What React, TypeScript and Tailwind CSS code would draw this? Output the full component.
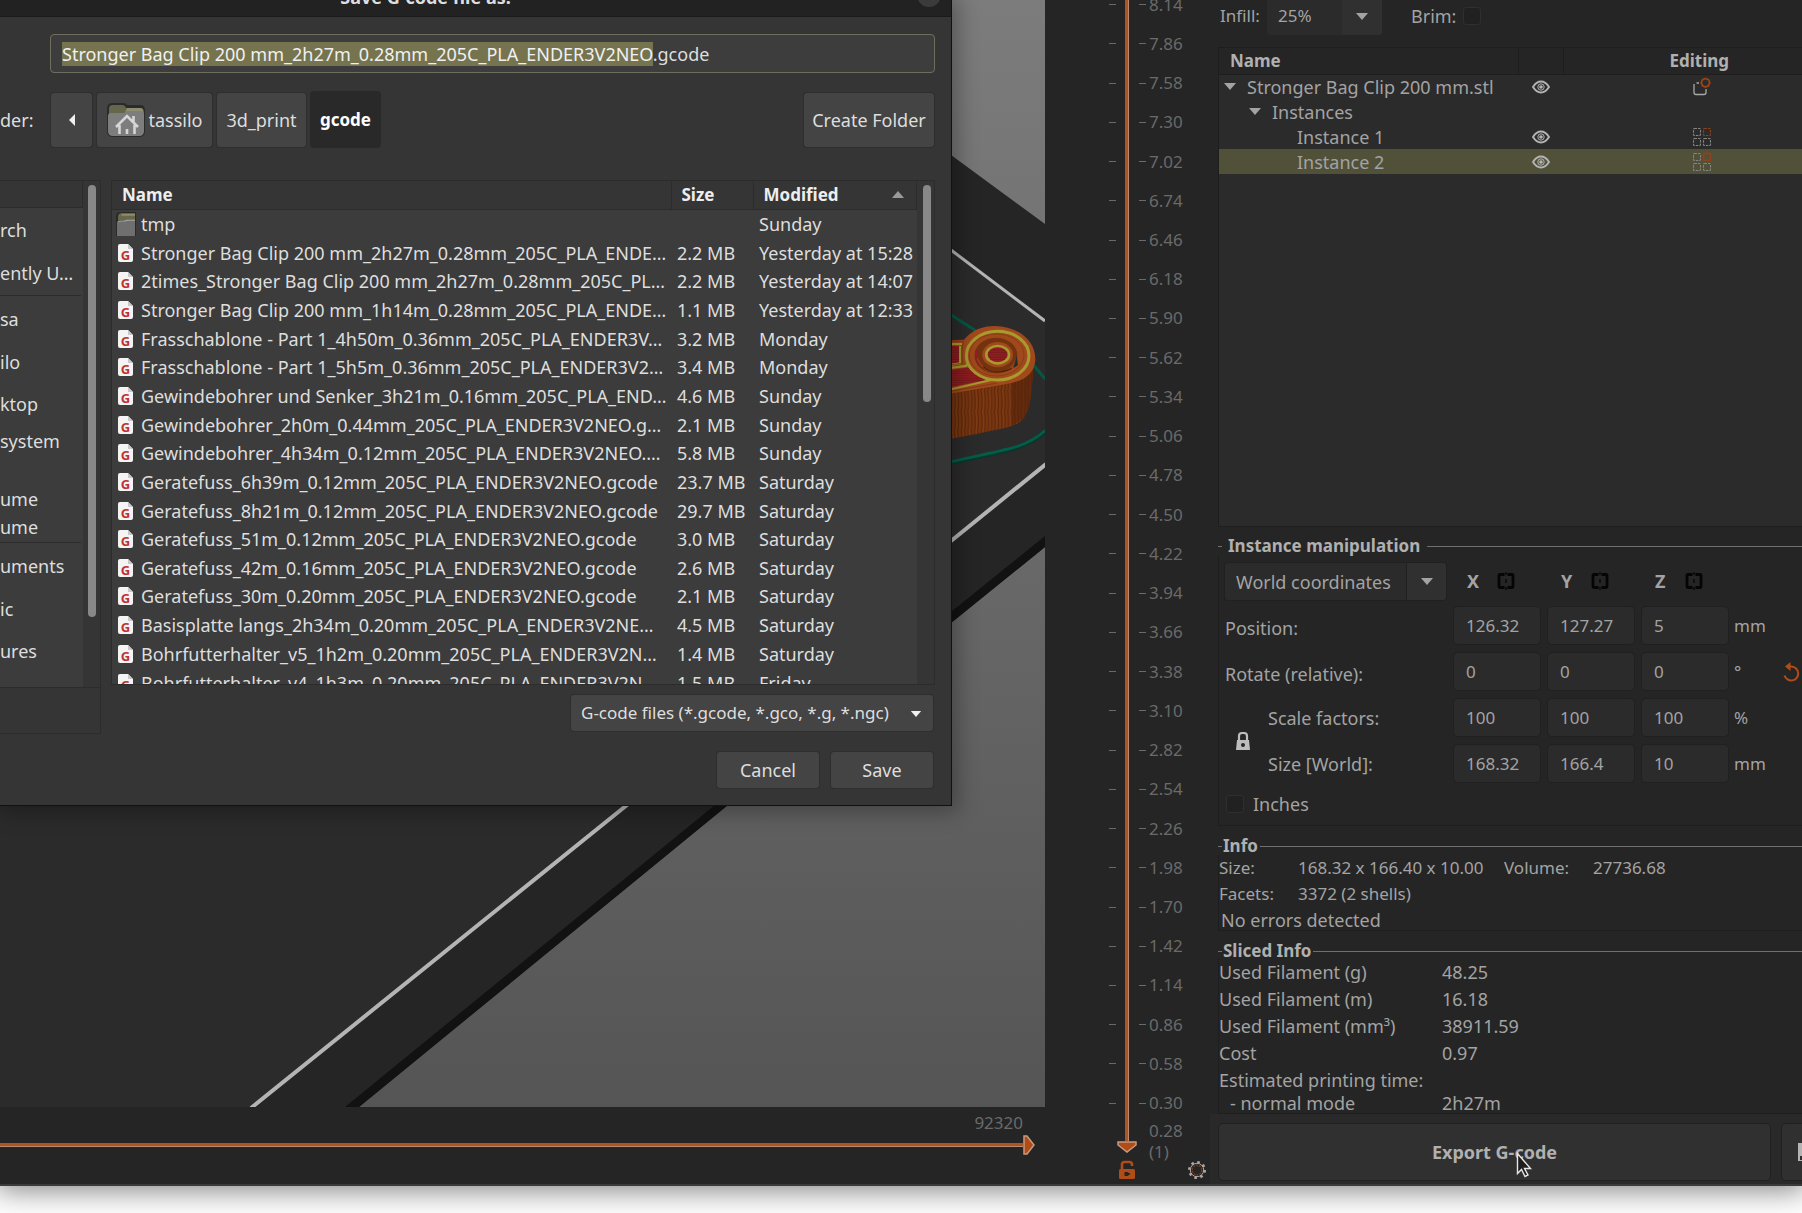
import { useEffect, useRef } from "react";
import type { ReactNode } from "react";

const FILES: [string, string, string][] = [
  ["Stronger Bag Clip 200 mm_2h27m_0.28mm_205C_PLA_ENDE…", "2.2 MB", "Yesterday at 15:28"],
  ["2times_Stronger Bag Clip 200 mm_2h27m_0.28mm_205C_PL…", "2.2 MB", "Yesterday at 14:07"],
  ["Stronger Bag Clip 200 mm_1h14m_0.28mm_205C_PLA_ENDE…", "1.1 MB", "Yesterday at 12:33"],
  ["Frasschablone - Part 1_4h50m_0.36mm_205C_PLA_ENDER3V…", "3.2 MB", "Monday"],
  ["Frasschablone - Part 1_5h5m_0.36mm_205C_PLA_ENDER3V2…", "3.4 MB", "Monday"],
  ["Gewindebohrer und Senker_3h21m_0.16mm_205C_PLA_END…", "4.6 MB", "Sunday"],
  ["Gewindebohrer_2h0m_0.44mm_205C_PLA_ENDER3V2NEO.g…", "2.1 MB", "Sunday"],
  ["Gewindebohrer_4h34m_0.12mm_205C_PLA_ENDER3V2NEO.…", "5.8 MB", "Sunday"],
  ["Geratefuss_6h39m_0.12mm_205C_PLA_ENDER3V2NEO.gcode", "23.7 MB", "Saturday"],
  ["Geratefuss_8h21m_0.12mm_205C_PLA_ENDER3V2NEO.gcode", "29.7 MB", "Saturday"],
  ["Geratefuss_51m_0.12mm_205C_PLA_ENDER3V2NEO.gcode", "3.0 MB", "Saturday"],
  ["Geratefuss_42m_0.16mm_205C_PLA_ENDER3V2NEO.gcode", "2.6 MB", "Saturday"],
  ["Geratefuss_30m_0.20mm_205C_PLA_ENDER3V2NEO.gcode", "2.1 MB", "Saturday"],
  ["Basisplatte langs_2h34m_0.20mm_205C_PLA_ENDER3V2NE…", "4.5 MB", "Saturday"],
  ["Bohrfutterhalter_v5_1h2m_0.20mm_205C_PLA_ENDER3V2N…", "1.4 MB", "Saturday"],
  ["Bohrfutterhalter_v4_1h3m_0.20mm_205C_PLA_ENDER3V2N…", "1.5 MB", "Friday"],
];

const LAYERS = [
  "8.14", "7.86", "7.58", "7.30", "7.02", "6.74", "6.46", "6.18", "5.90", "5.62", "5.34", "5.06", "4.78", "4.50", "4.22",
  "3.94", "3.66", "3.38", "3.10", "2.82", "2.54", "2.26", "1.98", "1.70", "1.42", "1.14", "0.86", "0.58", "0.30",
];

function Caret({ className }: { className: string }) {
  return (
    <svg viewBox="0 0 12 7" className={className} aria-hidden="true">
      <path d="M0 0h12L6 7z" fill="currentColor" />
    </svg>
  );
}

function FolderHome() {
  return (
    <svg viewBox="0 0 40 38" className="h-[38px] w-10" aria-hidden="true">
      <path d="M1 8q0-6 5-6h11q3 0 4 2h13q5 0 5 5v21q0 6-6 6H7q-6 0-6-6z" fill="#2b2b2b" />
      <path d="M3 8q0-4 4-4h9q3 0 4 3h14q4 0 4 4v4H3z" fill="#66664a" />
      <path d="M21 7h13q3 0 3 3v2H19z" fill="#8f8e70" />
      <path d="M2 15q0-3 3-3h13l3-2h13q4 0 4 3v17q0 5-5 5H7q-5 0-5-5z" fill="#7d7d7d" />
      <path d="M10 26l11-11 11 11M13.500 24v9M28.500 24v9M27.500 15v6M21 28v5" fill="none" stroke="#d6d6d6" strokeWidth="2.600" />
    </svg>
  );
}

function FolderSmall() {
  return (
    <svg viewBox="0 1 20 25" preserveAspectRatio="none" className="h-6 w-5" aria-hidden="true">
      <path d="M0 26V5q0-4 5-4h15v25z" fill="#2a2a2a" />
      <path d="M2 9V6q0-4 4-4h13v8H2z" fill="#686848" />
      <path d="M6 3h13v2H5z" fill="#8c8b6c" />
      <path d="M1 26V12q0-2 2-2h4l3-1h9v17z" fill="#6f6f6f" />
      <path d="M2 12q0-2 2-2h4l3-1h8v1h-7l-3 1H4z" fill="#a5a5a5" />
    </svg>
  );
}

function GFile() {
  return (
    <span className="relative ml-px flex h-[18px] w-[15px] items-end justify-center rounded-[2px] bg-[#f4f4f4] text-[13px] leading-[13px] font-bold text-[#c03030]">
      G
      <svg viewBox="0 0 5 5" className="absolute top-0 right-0 size-[5px]" aria-hidden="true">
        <path d="M0 0h5v5z" fill="#3c3c3c" />
        <path d="M0 0v5h5z" fill="#c9c9c9" />
      </svg>
    </span>
  );
}

function Eye() {
  return (
    <svg viewBox="0 0 18 14" className="mx-auto h-[14px] w-[18px]" aria-hidden="true">
      <path d="M1 7q3.500-5.500 8-5.500T17 7q-3.500 5.500-8 5.500T1 7z" fill="none" stroke="#b4b4b4" strokeWidth="1.900" />
      <circle cx="9" cy="7" r="3.200" fill="none" stroke="#b4b4b4" strokeWidth="1" />
      <circle cx="9" cy="7" r="1.800" fill="#b4b4b4" />
    </svg>
  );
}

function ObjectIcon() {
  return (
    <svg viewBox="0 0 20 20" className="mx-auto size-5" aria-hidden="true">
      <path d="M7 6H4.500M2 7v8.500Q2 17.500 4 17.500h8q2 0 2-2V12" fill="none" stroke="#a8a8a8" strokeWidth="1.300" />
      <path d="M13.500 1.500l3 1.200 1.300 3-1.300 3-3 1.300-3-1.300-1.300-3 1.300-3z" fill="none" stroke="#9a4218" strokeWidth="1.800" />
    </svg>
  );
}

function InstancesIcon({ active }: { active?: boolean }) {
  return (
    <svg viewBox="0 0 20 20" className="mx-auto size-5" fill="none" strokeWidth="1.100" strokeDasharray="2.500 1" aria-hidden="true">
      <rect x="1.500" y="1.500" width="7" height="7" rx="1" stroke="#858585" />
      <rect
        x="11.500"
        y="1.500"
        width="7"
        height="7"
        rx="1"
        stroke="#8a421f"
        strokeWidth={active ? 2 : 1.2}
        strokeDasharray={active ? "none" : "2.5 1"}
      />
      <rect x="1.500" y="11.500" width="7" height="7" rx="1" stroke="#858585" />
      <rect x="11.500" y="11.500" width="7" height="7" rx="1" stroke="#858585" />
    </svg>
  );
}

function MirrorIcon() {
  return (
    <svg viewBox="0 0 18 18" className="size-[18px]" fill="none" stroke="#050505" aria-hidden="true">
      <path d="M7.500 2.500H3q-1 0-1 1v11q0 1 1 1h4.500M10.500 2.500H15q1 0 1 1v11q0 1-1 1h-4.500" strokeWidth="2.800" />
      <path d="M9 0v3M9 7v4M9 15v3" strokeWidth="1.300" />
    </svg>
  );
}

function Viewport() {
  return (
    <svg
      viewBox="0 0 1045 1107"
      preserveAspectRatio="xMaxYMin slice"
      className="absolute inset-0 size-full"
      role="img"
      aria-label="Sliced model preview"
    >
      <defs>
        <linearGradient id="sky" x1="0" y1="0" x2="0" y2="1">
          <stop offset="0" stopColor="#7c7c7c" />
          <stop offset="1" stopColor="#555555" />
        </linearGradient>
        <pattern id="ribs" width="20" height="60" patternUnits="userSpaceOnUse">
          <rect width="20" height="60" fill="#78360f" />
          <path d="M3 0q5 30 2 60M13 0q4 30 1 60" stroke="#592409" strokeWidth="3" fill="none" />
          <path d="M8 0q5 30 2 60" stroke="#8a431b" strokeWidth="2" fill="none" />
        </pattern>
        <pattern id="lines" width="30" height="7" patternUnits="userSpaceOnUse">
          <rect width="30" height="7" fill="#941f22" />
          <path d="M0 5h30" stroke="#611214" strokeWidth="2" />
        </pattern>
      </defs>
      <rect width="1045" height="1107" fill="url(#sky)" />
      <path d="M0 0H740L951 155 1045 224V547L951 623 728 805 359 1107H0z" fill="#252525" />
      <path d="M0 0H620L951 250 1045 321V465L951 541 627 805 252 1107H0z" fill="#2b2b2b" />
      <path d="M1045 536L951 612 715 805 345 1107H359L728 805 951 623 1045 547z" fill="#121212" />
      <path d="M620 0L951 250 1045 321" fill="none" stroke="#b4b4b4" strokeWidth="3" />
      <path d="M1046 464L951 541 627 805 251 1108" fill="none" stroke="#b4b4b4" strokeWidth="4" />
      <g transform="translate(940 150) scale(.3333)" fill="none">
        <path d="M30 493L112 545M283 648L316 688" stroke="#045843" strokeWidth="9" />
        <path d="M30 939C120 918 180 908 230 893Q285 874 316 844" stroke="#04382c" strokeWidth="13" />
        <path d="M30 936C120 915 180 905 230 890Q285 871 316 841" stroke="#055c47" strokeWidth="8" />
        <path d="M30 722L180 698 280 655C275 735 270 780 252 803C225 838 170 836 120 850L30 867z" fill="url(#ribs)" />
        <path d="M280 655C275 735 270 780 252 803L216 828V700z" fill="#54230b" opacity=".6" />
        <path d="M30 571L72 569C98 536 135 528 165 528C240 530 288 575 286 630C284 675 245 695 200 702L30 731z" fill="#a0491c" />
        <path d="M30 588H60V640H30zM30 660L92 652Q115 685 150 688L30 712z" fill="url(#lines)" />
        <path d="M30 582H66M30 654L76 648Q84 645 84 632M30 719L150 691Q185 690 215 684M60 588V640L30 645" stroke="#a79a2e" strokeWidth="6" />
        <path d="M30 574H70Q62 605 68 640L30 645M30 724L170 700" stroke="#74330f" strokeWidth="2" />
        <ellipse cx="173" cy="617" rx="98" ry="76" fill="#a0491c" />
        <ellipse cx="173" cy="617" rx="94" ry="73" stroke="#a79a2e" strokeWidth="9" />
        <ellipse cx="170" cy="615" rx="82" ry="63" stroke="#8a3c15" strokeWidth="3" />
        <ellipse cx="168" cy="617" rx="66" ry="55" fill="#74330f" stroke="#a0491c" strokeWidth="3" />
        <path d="M110 600Q105 625 120 645" stroke="#941f22" strokeWidth="7" />
        <path d="M112 625Q130 668 175 668Q215 665 230 625" stroke="#9a4418" strokeWidth="4" />
        <path d="M130 650Q160 680 215 655" stroke="#4f2009" strokeWidth="4" />
        <path d="M230 617L234 645 220 655z" fill="#222f2a" />
        <ellipse cx="173" cy="614" rx="46" ry="38" fill="#a0491c" />
        <ellipse cx="173" cy="614" rx="34" ry="26" fill="url(#lines)" stroke="#a79a2e" strokeWidth="8" />
      </g>
    </svg>
  );
}

function PathButton({ children, className }: { children: ReactNode; className: string }) {
  return (
    <button className={`flex h-[54px] items-center justify-center rounded-[3px] bg-[#444444] shadow-[0_0_0_1px_#2e2e2e] ${className}`}>
      {children}
    </button>
  );
}

const PLACES: [string, string][] = [
  ["rch", "h-[43px]"],
  ["ently U…", "h-[43px]"],
  ["-", ""],
  ["sa", "h-[44px]"],
  ["ilo", "h-[42px]"],
  ["ktop", "h-[42px]"],
  ["system", "h-[32px] mb-[28px]"],
  ["ume", "h-[28px]"],
  ["ume", "h-[28px]"],
  ["-", ""],
  ["uments", "h-[44px]"],
  ["ic", "h-[42px]"],
  ["ures", "h-[42px]"],
];

function SaveDialog() {
  const nameRef = useRef<HTMLInputElement>(null);
  useEffect(() => {
    const el = nameRef.current;
    if (el) {
      el.focus();
      el.setSelectionRange(0, el.value.length - ".gcode".length);
    }
  }, []);

  return (
    <div
      role="dialog"
      aria-label="Save G-code file as:"
      className="absolute top-0 left-0 flex h-[806px] w-[952px] flex-col overflow-hidden border-r border-b border-[#111111] bg-[#353535] text-[#dedede] shadow-[2px_2px_20px_4px_rgba(0,0,0,0.3)]"
    >
      <header className="relative flex h-[17px] shrink-0 items-end justify-center border-b border-[#1b1b1b] bg-[#222222] pr-[100px]">
        <h1 className="mb-[9px] leading-5 font-bold text-[#dedede]">Save G-code file as:</h1>
        <button aria-label="Close" className="absolute -top-[17px] right-[10px] size-6 rounded-full bg-[#3b3b3b]" />
      </header>

      <div className="mt-[17px] ml-[50px] w-[885px]">
        <input
          ref={nameRef}
          aria-label="Name"
          defaultValue="Stronger Bag Clip 200 mm_2h27m_0.28mm_205C_PLA_ENDER3V2NEO.gcode"
          className="h-[39px] w-full rounded-[4px] border border-[#6e6e5f] bg-[#3d3d3d] px-[11px] leading-5 outline-none selection:bg-[#75744f] selection:text-[#f0f0f0]"
        />
      </div>

      <div className="mt-[17px] flex h-[59px] items-center pr-[17px]">
        <span className="w-[51px]">der:</span>
        <PathButton className="w-[41px]">
          <svg viewBox="0 0 6 12" className="h-3 w-[6px]" aria-label="Back">
            <path d="M6 0v12L0 6z" fill="#f0f0f0" />
          </svg>
        </PathButton>
        <PathButton className="ml-[5px] w-[115px] gap-[2px]">
          <FolderHome />
          tassilo
        </PathButton>
        <PathButton className="ml-[5px] w-[89px]">3d_print</PathButton>
        <button className="ml-1 h-[57px] w-[71px] rounded-[4px] bg-[#292929] text-[17px] font-bold text-white">gcode</button>
        <PathButton className="ml-auto w-[130px] whitespace-nowrap">Create Folder</PathButton>
      </div>

      <div className="mt-[31px] flex items-start">
        <nav aria-label="Places" className="h-[554px] w-[101px] shrink-0 border-t border-r border-b border-[#2c2c2c]">
          <div className="flex h-[507px] border-b border-[#2c2c2c]">
            <ul className="w-[83px] overflow-hidden bg-[#3c3c3c]">
              <li className="h-[27px] border-r border-b border-[#2c2c2c] bg-[#353535]" />
              {PLACES.map(([label, size], i) =>
                label === "-" ? (
                  <li key={i} className="my-px mr-[2px] h-px bg-[#2c2c2c]" />
                ) : (
                  <li key={i} className={`flex items-center whitespace-nowrap ${size}`}>
                    <a href="#places">{label}</a>
                  </li>
                ),
              )}
            </ul>
            <div className="flex-1 pt-1 pl-[5px]">
              <div className="h-[432px] w-2 rounded-full bg-[#888888]" />
            </div>
          </div>
        </nav>

        <div className="ml-[10px] flex h-[505px] w-[824px] overflow-hidden border border-[#2c2c2c]">
          <table className="h-[516px] w-[805px] table-fixed border-collapse bg-[#3c3c3c] text-left whitespace-nowrap">
            <colgroup>
              <col className="w-[559px]" />
              <col className="w-[82px]" />
              <col />
            </colgroup>
            <thead>
              <tr className="h-[28px] bg-[#353535] text-[17px] text-[#eeeeee]">
                <th className="border-r border-b border-[#2c2c2c] py-0 pl-[10px] font-bold">Name</th>
                <th className="border-r border-b border-[#2c2c2c] py-0 pl-[10px] font-bold">Size</th>
                <th className="border-r border-b border-[#2c2c2c] py-0 pr-3 pl-[10px] font-bold">
                  <span className="flex items-center justify-between">
                    Modified
                    <Caret className="h-[7px] w-3 rotate-180 text-[#9a9a9a]" />
                  </span>
                </th>
              </tr>
            </thead>
            <tbody>
              <tr>
                <td className="p-0">
                  <span className="flex items-center gap-[5px] pl-1">
                    <FolderSmall />
                    tmp
                  </span>
                </td>
                <td className="p-0" />
                <td className="p-0 pl-[6px]">Sunday</td>
              </tr>
              {FILES.map(([name, size, date]) => (
                <tr key={name}>
                  <td className="p-0">
                    <span className="flex items-center gap-2 pl-[5px]">
                      <GFile />
                      {name}
                    </span>
                  </td>
                  <td className="p-0 pl-[6px]">{size}</td>
                  <td className="p-0 pl-[6px]">{date}</td>
                </tr>
              ))}
            </tbody>
          </table>
          <div className="flex-1 pt-1 pl-[6px]">
            <div className="h-[217px] w-2 rounded-full bg-[#888888]" />
          </div>
        </div>
      </div>

      <div className="-mt-[39px] mr-[18px] flex flex-col items-end gap-[21px]">
        <div className="relative w-[362px]">
          <select
            aria-label="File type"
            className="h-[36px] w-full appearance-none rounded-[3px] bg-[#444444] pl-[10px] text-[17px] shadow-[0_0_0_1px_#2e2e2e]"
          >
            <option>G-code files (*.gcode, *.gco, *.g, *.ngc)</option>
          </select>
          <Caret className="pointer-events-none absolute top-[16px] right-[11px] h-[6px] w-3 text-[#f0f0f0]" />
        </div>
        <div className="flex gap-3">
          <button className="h-[36px] w-[102px] rounded-[3px] bg-[#444444] shadow-[0_0_0_1px_#2e2e2e]">Cancel</button>
          <button className="h-[36px] w-[102px] rounded-[3px] bg-[#444444] shadow-[0_0_0_1px_#2e2e2e]">Save</button>
        </div>
      </div>
    </div>
  );
}

function LayerSlider() {
  return (
    <div className="relative w-[165px] shrink-0 overflow-hidden text-[17px] text-[#6a6a6a]">
      <ul className="-mt-[15px] flex h-[1138px] flex-col">
        {LAYERS.map((z) => (
          <li key={z} className="flex flex-1 items-center pl-[64px]">
            <span className="h-px w-[7px] bg-[#6a6a6a]" />
            <span className="ml-[23px] h-px w-[7px] bg-[#6a6a6a]" />
            <span className="ml-[3px]">{z}</span>
          </li>
        ))}
      </ul>
      <div className="-mt-[3px] ml-[104px] leading-[21px]">
        0.28
        <br />
        (1)
      </div>
      <div className="absolute top-0 left-[72px] flex flex-col items-center">
        <div className="h-[1141px] w-[4px] border-r border-[#b98a6e] bg-[#ad5426]" />
        <svg viewBox="0 0 20 12" className="h-3 w-5" aria-hidden="true">
          <path d="M1 1h18v3l-9 7-9-7z" fill="#b04c15" stroke="#c99a80" strokeWidth="1.500" />
        </svg>
        <button aria-label="Unlock layer range" className="mt-[7px]">
          <svg viewBox="0 0 18 20" className="h-5 w-[18px]">
            <path d="M4 10V4.500q0-2.500 2.500-2.500h5q2.500 0 2.500 2.500V6" fill="none" stroke="#b04c15" strokeWidth="2.600" />
            <rect x="1" y="9" width="16" height="10" rx="1.500" fill="#b04c15" />
            <path d="M6.500 12h3l3 2-3 2h-3z" fill="#252525" />
          </svg>
        </button>
      </div>
      <input
        type="range"
        aria-label="Layer"
        className="absolute top-0 left-[70px] h-[1154px] w-5 opacity-0 [writing-mode:vertical-lr]"
      />
      <button aria-label="Slider settings" className="absolute top-[1160px] left-[142px]">
        <svg viewBox="0 0 20 20" className="size-5">
          <circle cx="10" cy="10" r="7.800" fill="none" stroke="#a8a8a8" strokeWidth="2.400" strokeDasharray="2.600 3.526" />
          <circle cx="10" cy="10" r="6.700" fill="none" stroke="#a8a8a8" strokeWidth="1" />
          <circle cx="10" cy="10" r="4.800" fill="none" stroke="#7c3a1a" strokeWidth="1.300" strokeDasharray="2 1" />
        </svg>
      </button>
    </div>
  );
}

function Legend({ children, gap }: { children: ReactNode; gap: string }) {
  return (
    <h2 className={`flex h-5 items-center text-[17px] font-bold whitespace-nowrap text-[#b0b0b0] ${gap}`}>
      <span className="-mr-px h-px w-[4px] bg-[#707070]" />
      {children}
      <span className="h-px flex-1 bg-[#707070]" />
    </h2>
  );
}

function NumberBox({ label, value }: { label: string; value: string }) {
  return (
    <input
      aria-label={label}
      defaultValue={value}
      className="h-[37px] w-[86px] rounded-[4px] bg-[#2b2b2b] pl-3 text-[17px] shadow-[0_0_0_1px_#202020]"
    />
  );
}

function NumberRow({ label, unit, values }: { label: string; unit: ReactNode; values: string[] }) {
  return (
    <>
      {values.map((v, i) => (
        <NumberBox key={i} label={`${label} ${"XYZ"[i]}`} value={v} />
      ))}
      <span className="flex h-[37px] items-center justify-between pr-[2px] text-[17px]">{unit}</span>
    </>
  );
}

function Sidebar() {
  return (
    <aside className="flex w-[592px] shrink-0 flex-col text-[#a3a3a3]">
      <div className="flex h-[47px] items-start pl-[10px]">
        <label htmlFor="infill" className="w-[47px] pt-1 text-[17px]">
          Infill:
        </label>
        <div className="relative -mt-[3px] w-[115px]">
          <select id="infill" className="h-[38px] w-full appearance-none rounded-[3px] bg-[#2b2b2b] pl-[11px] text-[17px]">
            <option>25%</option>
          </select>
          <span className="pointer-events-none absolute top-0 right-0 flex h-[38px] w-10 items-center justify-center rounded-r-[3px] bg-[#303030]">
            <Caret className="h-[7px] w-3" />
          </span>
        </div>
        <label className="ml-[29px] flex items-center gap-[7px] pt-1">
          Brim:
          <input type="checkbox" className="size-[18px] appearance-none rounded-[3px] border border-[#2f2f2f] bg-[#212121]" />
        </label>
      </div>

      <div className="ml-2 h-[480px] border-y border-l border-[#1e1e1e] bg-[#2b2b2b]">
        <table className="w-full table-fixed border-collapse text-left">
          <colgroup>
            <col className="w-[299px]" />
            <col className="w-[45px]" />
            <col />
          </colgroup>
          <thead>
            <tr className="h-[26px] bg-[#252525] text-[17px] text-[#b0b0b0]">
              <th className="border-r border-b border-[#1e1e1e] py-0 pl-[11px] font-bold">Name</th>
              <th className="border-r border-b border-[#1e1e1e] p-0" aria-label="Visible" />
              <th className="border-b border-[#1e1e1e] py-0 pl-[106px] font-bold">Editing</th>
            </tr>
          </thead>
          <tbody>
            <tr className="h-[25px]">
              <td className="p-0">
                <span className="flex items-center gap-[11px] pl-[5px]">
                  <Caret className="h-[7px] w-3" />
                  Stronger Bag Clip 200 mm.stl
                </span>
              </td>
              <td className="p-0">
                <Eye />
              </td>
              <td className="p-0 pl-[38px]">
                <ObjectIcon />
              </td>
            </tr>
            <tr className="h-[25px]">
              <td className="p-0">
                <span className="flex items-center gap-[11px] pl-[30px]">
                  <Caret className="h-[7px] w-3" />
                  Instances
                </span>
              </td>
              <td />
              <td />
            </tr>
            <tr className="h-[25px]">
              <td className="p-0 pl-[78px]">Instance 1</td>
              <td className="p-0">
                <Eye />
              </td>
              <td className="p-0 pl-[38px]">
                <InstancesIcon />
              </td>
            </tr>
            <tr className="h-[25px] bg-[#51513a]">
              <td className="p-0 pl-[78px]">Instance 2</td>
              <td className="p-0">
                <Eye />
              </td>
              <td className="p-0 pl-[38px]">
                <InstancesIcon active />
              </td>
            </tr>
          </tbody>
        </table>
      </div>

      <section className="mt-[9px] ml-2">
        <Legend gap="gap-[7px]">Instance manipulation</Legend>
        <div className="h-[270px] border-b border-l border-[#1e1e1e] pt-[7px] pl-[6px]">
          <div className="grid grid-cols-[229px_94px_94px_92px_1fr] gap-y-[9px]">
            <div className="relative h-[35px] w-[221px]">
              <select aria-label="Coordinates" className="h-[37px] w-full appearance-none rounded-[3px] bg-[#2b2b2b] pl-[11px] shadow-[0_0_0_1px_#202020]">
                <option>World coordinates</option>
              </select>
              <span className="pointer-events-none absolute top-0 right-0 flex h-[37px] w-10 items-center justify-center rounded-r-[3px] border-l border-[#202020] bg-[#303030]">
                <Caret className="h-[7px] w-3" />
              </span>
            </div>
            {["X", "Y", "Z"].map((axis) => (
              <div key={axis} className="flex h-[35px] items-center pl-[13px] font-bold">
                <span className="w-[30px]">{axis}</span>
                <button aria-label={`Mirror ${axis}`}>
                  <MirrorIcon />
                </button>
              </div>
            ))}
            <span />

            <span className="flex items-center pt-1">Position:</span>
            <NumberRow label="Position" unit="mm" values={["126.32", "127.27", "5"]} />

            <span className="flex items-center pt-1">Rotate (relative):</span>
            <NumberRow
              label="Rotate"
              values={["0", "0", "0"]}
              unit={
                <>
                  °
                  <button aria-label="Reset rotation">
                    <svg viewBox="0 0 18 20" className="h-5 w-[18px]">
                      <path d="M8 4.500h1.500a7 7 0 1 1-7 9" fill="none" stroke="#b04c15" strokeWidth="2" />
                      <path d="M3 4.500L8.500 0v9z" fill="#b04c15" />
                    </svg>
                  </button>
                </>
              }
            />

            <div className="row-span-2 flex items-center">
              <button aria-label="Lock scaling ratio" className="w-[43px] pl-[10px]">
                <svg viewBox="0 0 16 20" className="h-5 w-4">
                  <path d="M4 10V5q0-3 3-3h2q3 0 3 3v5" fill="none" stroke="#bdbdbd" strokeWidth="2.200" />
                  <path d="M2 9h12l1 10H1z" fill="#bdbdbd" />
                  <circle cx="8" cy="14" r="2" fill="#252525" />
                </svg>
              </button>
              <div className="flex flex-col gap-[9px]">
                <span className="flex h-[37px] items-center">Scale factors:</span>
                <span className="flex h-[37px] items-center">Size [World]:</span>
              </div>
            </div>
            <NumberRow label="Scale" unit="%" values={["100", "100", "100"]} />
            <NumberRow label="Size" unit="mm" values={["168.32", "166.4", "10"]} />
          </div>
          <label className="mt-[10px] flex items-center gap-[9px] pl-px">
            <input type="checkbox" className="size-[18px] appearance-none rounded-[3px] border border-[#2f2f2f] bg-[#212121]" />
            Inches
          </label>
        </div>
      </section>

      <section className="mt-[10px] ml-2">
        <Legend gap="gap-[2px]">Info</Legend>
        <div className="-mt-px h-[76px] border-b border-l border-[#1e1e1e] leading-[26px] whitespace-nowrap">
          <div className="grid grid-cols-[79px_206px_89px_1fr] text-[17px]">
            <span>Size:</span>
            <span>168.32 x 166.40 x 10.00</span>
            <span>Volume:</span>
            <span>27736.68</span>
            <span>Facets:</span>
            <span className="col-span-3">3372 (2 shells)</span>
          </div>
          <p className="pl-[2px]">No errors detected</p>
        </div>
      </section>

      <section className="mt-[10px] ml-2">
        <Legend gap="gap-[2px]">Sliced Info</Legend>
        <dl className="-mt-[2px] grid h-[155px] grid-cols-[223px_1fr] content-start border-b border-l border-[#1e1e1e] leading-[27px]">
          <dt>Used Filament (g)</dt>
          <dd>48.25</dd>
          <dt>Used Filament (m)</dt>
          <dd>16.18</dd>
          <dt>Used Filament (mm³)</dt>
          <dd>38911.59</dd>
          <dt>Cost</dt>
          <dd>0.97</dd>
          <dt className="col-span-2">Estimated printing time:</dt>
          <dt className="pl-[11px] leading-[18px]">- normal mode</dt>
          <dd className="leading-[18px]">2h27m</dd>
        </dl>
      </section>

      <footer className="flex flex-1 gap-3 overflow-hidden bg-[#292929] pt-[10px] pl-[9px]">
        <button className="relative h-[56px] w-[551px] shrink-0 rounded-[4px] bg-[#303030] font-bold text-[#b0b0b0] shadow-[0_0_0_1px_#202020]">
          Export G-code
          <svg viewBox="0 0 16 26" className="absolute top-[28px] left-[297px] h-[26px] w-4" aria-hidden="true">
            <path d="M1.500 1.500v20l4-4 3.500 7 3-1.500-3.500-6.500h6z" fill="#1d1d1d" stroke="#e6e6e6" strokeWidth="1.400" />
          </svg>
        </button>
        <button
          aria-label="Export to SD card"
          className="flex h-[56px] w-[56px] shrink-0 items-center rounded-[4px] bg-[#303030] pl-[15px] shadow-[0_0_0_1px_#202020]"
        >
          <svg viewBox="0 0 20 20" className="size-5 shrink-0">
            <path d="M1 1h14l4 4v14H1z" fill="#b4b4b4" />
            <path d="M3 14h14v4H3z" fill="#303030" />
          </svg>
        </button>
      </footer>
    </aside>
  );
}

export default function App() {
  return (
    <div className="h-screen overflow-hidden bg-white font-['Noto_Sans','Open_Sans',sans-serif] text-[18px] leading-6">
      <main className="relative flex h-[calc(100vh-27px)] border-b-2 border-[#3a3a3a] bg-[#252525] shadow-[0_0_28px_4px_rgba(0,0,0,0.5)]">
        <div className="flex min-w-0 flex-1 flex-col">
          <div className="relative flex-1">
            <Viewport />
          </div>
          <div className="relative h-[77px] text-[17px] text-[#6a6a6a]">
            <p className="pt-[4px] pr-[22px] text-right">92320</p>
            <div className="flex items-center pr-[10px]">
              <div className="h-[4px] flex-1 border-b border-[#b98a6e] bg-[#ad5426]" />
              <svg viewBox="0 0 12 20" className="h-5 w-3" aria-hidden="true">
                <path d="M1 1h3l7 9-7 9H1z" fill="#b04c15" stroke="#c99a80" strokeWidth="1.500" />
              </svg>
            </div>
            <input type="range" aria-label="Moves" className="absolute top-[28px] left-0 h-5 w-full opacity-0" />
          </div>
        </div>
        <LayerSlider />
        <Sidebar />
        <SaveDialog />
      </main>
    </div>
  );
}
